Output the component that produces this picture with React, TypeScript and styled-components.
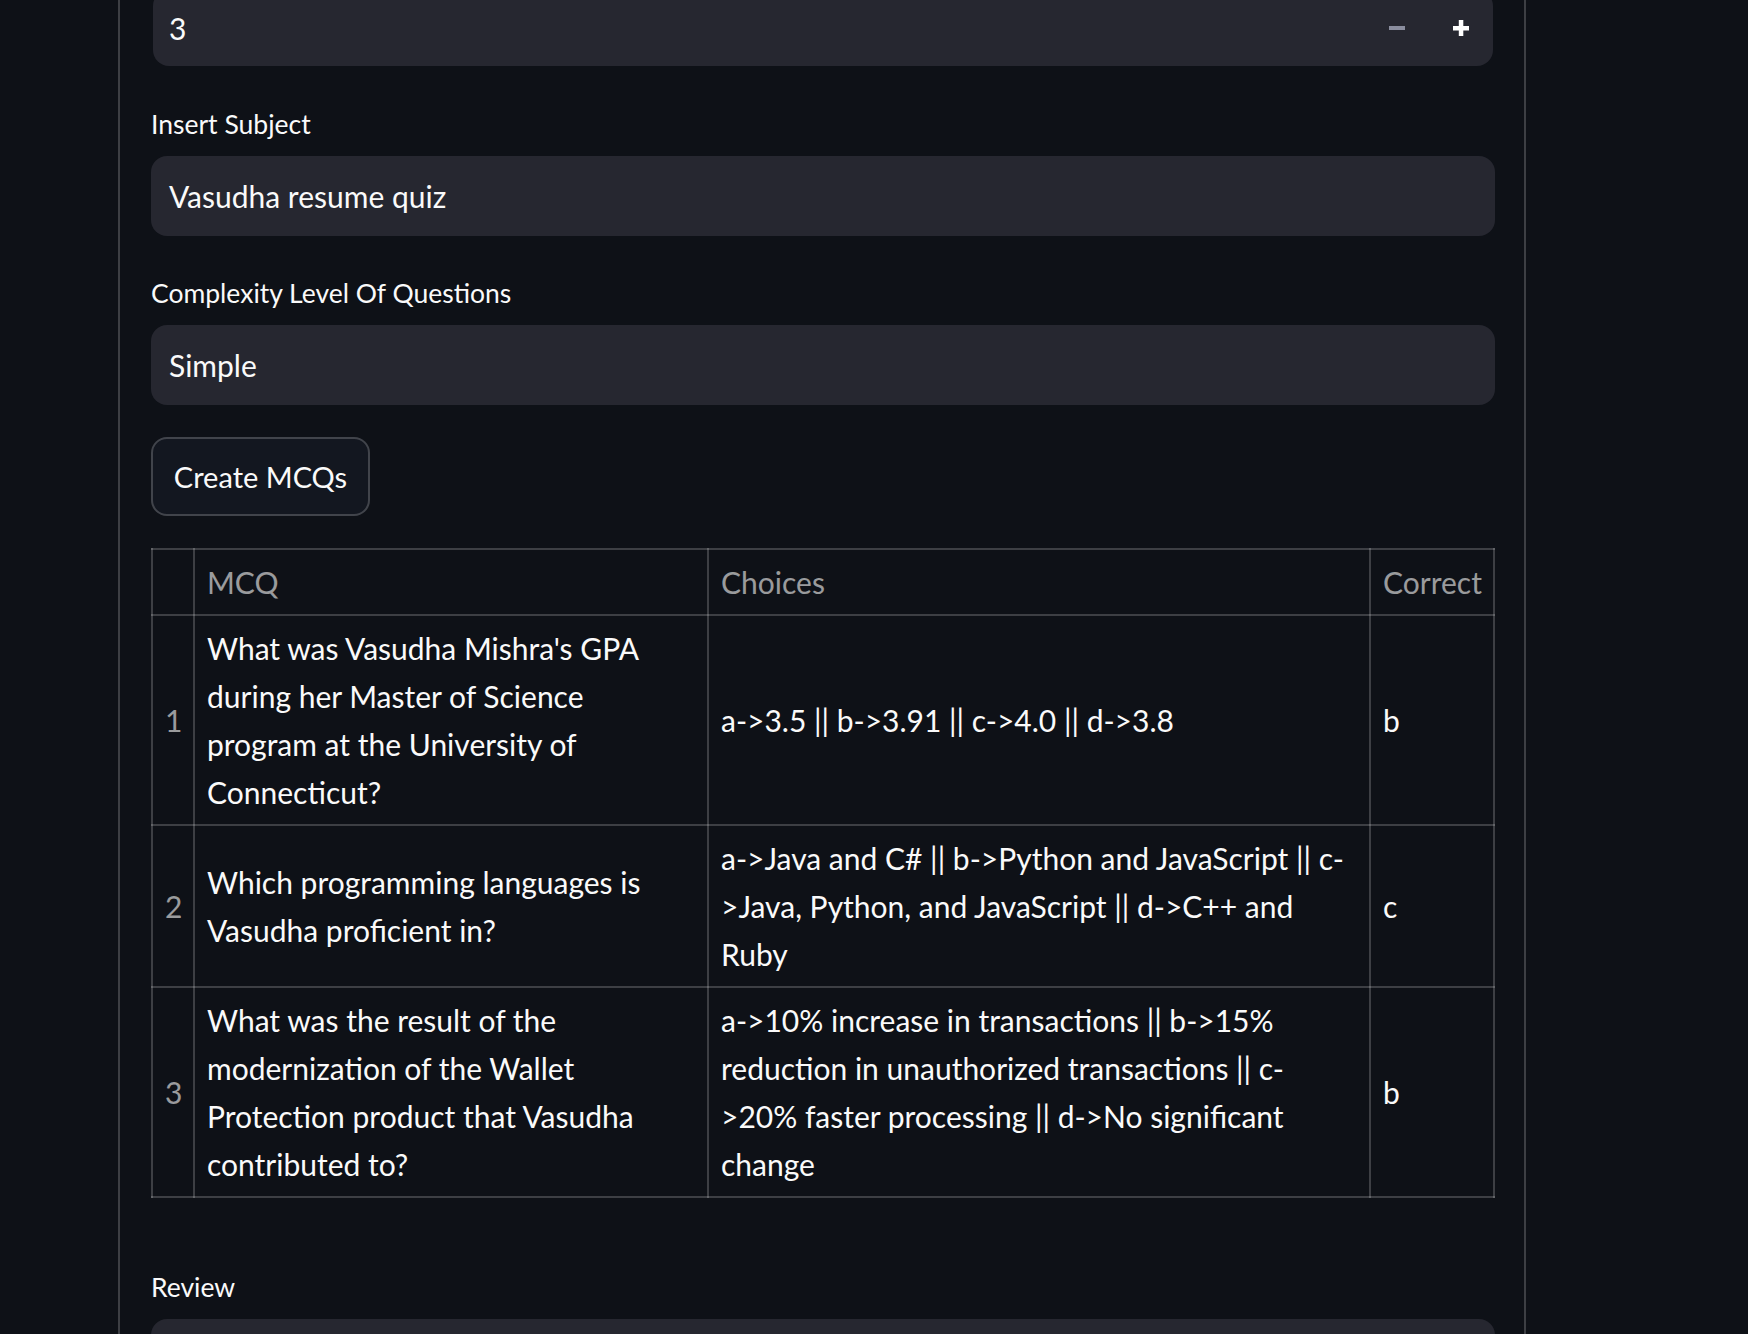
import React from "react";
import styled, { createGlobalStyle } from "styled-components";

const FONT = `"Lato", "Noto Sans", "Liberation Sans", sans-serif`;
const TEXT = "#fafafa";
const LINE = "rgba(250, 250, 250, 0.2)";
const MUTED = "rgba(250, 250, 250, 0.6)";
const FIELD_BG = "#262730";

const GlobalStyle = createGlobalStyle`
  html, body {
    margin: 0;
    padding: 0;
    background: #0e1117;
    color: ${TEXT};
    font-family: ${FONT};
    overflow: hidden;
  }
  * { box-sizing: border-box; }
`;

const Viewport = styled.div`
  height: 1334px;
  overflow: hidden;
`;

const Panel = styled.main`
  margin-left: 118px;
  width: 1408px;
  min-height: 1400px;
  margin-top: -10px;
  border-left: 2px solid ${LINE};
  border-right: 2px solid ${LINE};
  padding: 0 29px 0 31px;
  display: flex;
  flex-direction: column;
  gap: 32px;
`;

const NumberField = styled.div`
  margin: 0 2px;
  height: 76px;
  background: ${FIELD_BG};
  border-radius: 16px;
  display: flex;
  align-items: center;
`;

const NumberValue = styled.span`
  flex: 1;
  padding-left: 16px;
  font-size: 30px;
  line-height: 76px;
`;

const StepButton = styled.span<{ $muted?: boolean }>`
  width: 64px;
  height: 76px;
  display: flex;
  align-items: center;
  justify-content: center;
  color: ${(p) => (p.$muted ? "#8a8d9e" : "#ffffff")};
`;

const Field = styled.div<{ $first?: boolean }>`
  display: flex;
  flex-direction: column;
  margin-top: ${(p) => (p.$first ? "1px" : "0")};
`;

const Label = styled.label`
  font-size: 26.5px;
  line-height: 50px;
  margin-bottom: 7px;
`;

const InputBox = styled.div<{ $tall?: boolean }>`
  height: ${(p) => (p.$tall ? "120px" : "80px")};
  background: ${FIELD_BG};
  border-radius: 16px;
  padding-left: 18px;
  font-size: 30px;
  line-height: 80px;
`;

const ActionButton = styled.button`
  align-self: flex-start;
  width: 219px;
  height: 79px;
  background: #131720;
  border: 2px solid ${LINE};
  border-radius: 16px;
  color: ${TEXT};
  font-family: ${FONT};
  font-size: 29px;
  padding: 0;
`;

const Table = styled.table`
  width: 100%;
  border-collapse: collapse;
  table-layout: fixed;
  border: 2px solid ${LINE};
  font-size: 30px;
  line-height: 48px;
  margin-bottom: 32px;
`;

const HeadCell = styled.th`
  border: 2px solid ${LINE};
  padding: 8px 12px;
  color: ${MUTED};
  font-weight: 400;
  text-align: left;
  vertical-align: middle;
`;

const IndexCell = styled.th`
  border: 2px solid ${LINE};
  padding: 8px 12px;
  color: ${MUTED};
  font-weight: 400;
  text-align: left;
  vertical-align: middle;
`;

const Cell = styled.td`
  border: 2px solid ${LINE};
  padding: 8px 12px;
  vertical-align: middle;
`;

const Glyph = styled.svg`
  display: block;
`;

const MinusIcon = () => (
  <Glyph width="16" height="16" viewBox="0 0 16 16" fill="currentColor">
    <rect x="0" y="6" width="16" height="4" />
  </Glyph>
);

const PlusIcon = () => (
  <Glyph width="16" height="16" viewBox="0 0 16 16" fill="currentColor">
    <rect x="0" y="6" width="16" height="4.5" />
    <rect x="5.8" y="0" width="4.5" height="16" />
  </Glyph>
);

const rows = [
  {
    q: "What was Vasudha Mishra's GPA during her Master of Science program at the University of Connecticut?",
    c: "a->3.5 || b->3.91 || c->4.0 || d->3.8",
    a: "b",
  },
  {
    q: "Which programming languages is Vasudha proficient in?",
    c: "a->Java and C# || b->Python and JavaScript || c->Java, Python, and JavaScript || d->C++ and Ruby",
    a: "c",
  },
  {
    q: "What was the result of the modernization of the Wallet Protection product that Vasudha contributed to?",
    c: "a->10% increase in transactions || b->15% reduction in unauthorized transactions || c->20% faster processing || d->No significant change",
    a: "b",
  },
];

export default function App() {
  return (
    <Viewport>
      <GlobalStyle />
      <Panel>
        <NumberField>
          <NumberValue>3</NumberValue>
          <StepButton $muted>
            <MinusIcon />
          </StepButton>
          <StepButton>
            <PlusIcon />
          </StepButton>
        </NumberField>

        <Field $first>
          <Label>Insert Subject</Label>
          <InputBox>Vasudha resume quiz</InputBox>
        </Field>

        <Field>
          <Label>Complexity Level Of Questions</Label>
          <InputBox>Simple</InputBox>
        </Field>

        <ActionButton>Create MCQs</ActionButton>

        <Table>
          <colgroup>
            <col style={{ width: "42px" }} />
            <col style={{ width: "514px" }} />
            <col style={{ width: "662px" }} />
            <col style={{ width: "124px" }} />
          </colgroup>
          <thead>
            <tr>
              <HeadCell />
              <HeadCell>MCQ</HeadCell>
              <HeadCell>Choices</HeadCell>
              <HeadCell>Correct</HeadCell>
            </tr>
          </thead>
          <tbody>
            {rows.map((r, i) => (
              <tr key={i}>
                <IndexCell>{i + 1}</IndexCell>
                <Cell>{r.q}</Cell>
                <Cell>{r.c}</Cell>
                <Cell>{r.a}</Cell>
              </tr>
            ))}
          </tbody>
        </Table>

        <Field>
          <Label>Review</Label>
          <InputBox $tall />
        </Field>
      </Panel>
    </Viewport>
  );
}
